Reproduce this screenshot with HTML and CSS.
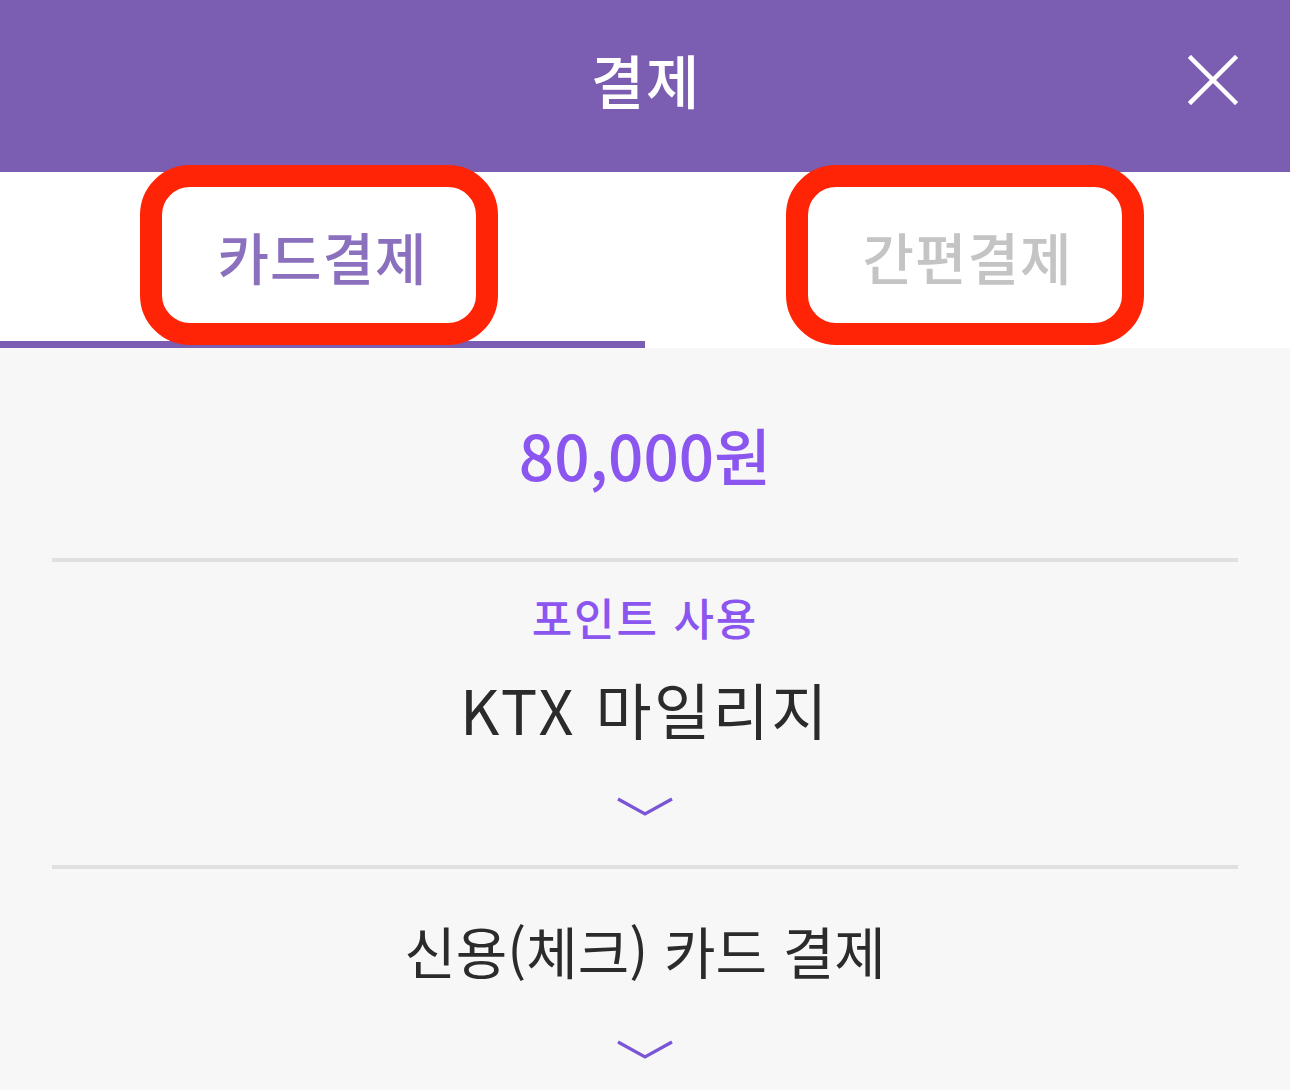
FILE: index.html
```html
<!DOCTYPE html>
<html lang="ko">
<head>
    <meta charset="UTF-8">
    <meta name="viewport" content="width=device-width, initial-scale=1.0">
    <title>결제</title>
    <link rel="stylesheet" href="styles.css">
</head>
<body>
    <header class="top-bar">
        <span></span>
        <h1 class="top-title">결제</h1>
        <button class="close-btn" aria-label="닫기">
            <svg width="50" height="50" viewBox="0 0 50 50">
                <path d="M3 3 L47 47 M47 3 L3 47" stroke="#fff" stroke-width="4.5" stroke-linecap="square"/>
            </svg>
        </button>
    </header>

    <nav class="tabs">
        <div class="tab active">
            <span>카드결제</span>
            <div class="mark mark-left"></div>
        </div>
        <div class="tab">
            <span>간편결제</span>
            <div class="mark mark-right"></div>
        </div>
    </nav>

    <main class="pay-body">
        <section class="amount-box">
            <p class="amount">80,000원</p>
        </section>

        <section class="option">
            <p class="option-label">포인트 사용</p>
            <p class="option-title">KTX 마일리지</p>
            <svg class="chevron" width="58" height="22" viewBox="0 0 58 22">
                <path d="M2 3 L29 18 L56 3" fill="none" stroke="#7a55d6" stroke-width="3.2"/>
            </svg>
        </section>

        <section class="option last">
            <p class="option-title small">신용(체크) 카드 결제</p>
            <svg class="chevron" width="58" height="22" viewBox="0 0 58 22">
                <path d="M2 3 L29 18 L56 3" fill="none" stroke="#7a55d6" stroke-width="3.2"/>
            </svg>
        </section>
    </main>
</body>
</html>
```

FILE: styles.css
```css
* {
    margin: 0;
    padding: 0;
    box-sizing: border-box;
    font-family: "Noto Sans CJK KR", "Noto Sans", sans-serif;
}

body {
    background: #f7f7f7;
    width: 1290px;
    height: 1090px;
    overflow: hidden;
}

.top-bar {
    height: 172px;
    background: #7b5db2;
    display: grid;
    grid-template-columns: 1fr auto 1fr;
    align-items: center;
}

.top-title {
    color: #fff;
    font-size: 58px;
    font-weight: 500;
    line-height: 1;
    letter-spacing: 2px;
    margin-top: -14px;
    margin-left: 2px;
}

.close-btn {
    justify-self: end;
    margin-right: 52px;
    margin-top: -12px;
    background: none;
    border: none;
    display: flex;
}

.tabs {
    display: flex;
    height: 176px;
    background: #fff;
}

.tab {
    position: relative;
    flex: 1;
    display: flex;
    align-items: center;
    justify-content: center;
    font-size: 56px;
    font-weight: 500;
    letter-spacing: 1px;
    color: #c4c4c4;
    border-bottom: 7px solid transparent;
}

.tab span {
    margin-top: -2px;
}

.tab.active {
    color: #8a70bd;
    border-bottom-color: #7b5db2;
}

/* red annotation boxes */
.mark {
    position: absolute;
    top: -7px;
    width: 358px;
    height: 180px;
    border: 22px solid #ff2405;
    border-radius: 50px;
}

.mark-left {
    left: 140px;
}

.mark-right {
    left: 141px;
}

.pay-body {
    padding: 0 52px;
}

.amount-box {
    padding: 66px 0 64px;
    border-bottom: 4px solid #e0e0e0;
    text-align: center;
}

.amount {
    font-size: 62px;
    line-height: 80px;
    font-weight: 500;
    color: #8b55ef;
}

.option {
    display: flex;
    flex-direction: column;
    align-items: center;
    padding-bottom: 47px;
    border-bottom: 4px solid #e0e0e0;
}

.option-label {
    margin-top: 27px;
    font-size: 44px;
    line-height: 56px;
    font-weight: 500;
    letter-spacing: 2px;
    color: #8b55ef;
}

.option-title {
    margin-top: 30px;
    font-size: 61px;
    line-height: 68px;
    letter-spacing: 2.5px;
    color: #2b2b2b;
}

.option-title.small {
    margin-top: 47px;
    font-size: 56px;
    letter-spacing: 0;
}

.chevron {
    margin-top: 53px;
}

.option.last {
    border-bottom: none;
}

.option.last .chevron {
    margin-top: 55px;
}
```
